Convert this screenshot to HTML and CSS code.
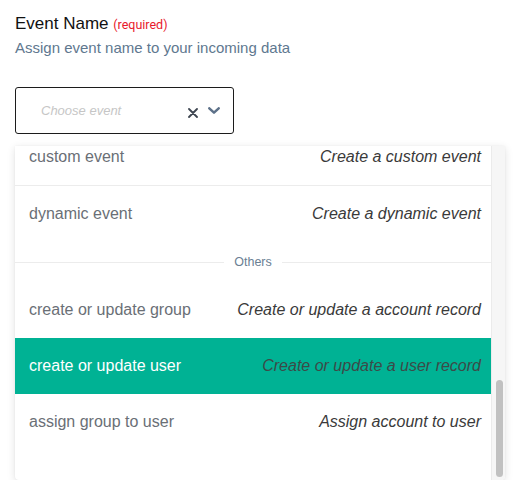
FILE: index.html
```html
<!DOCTYPE html>
<html>
<head>
<meta charset="utf-8">
<link rel="stylesheet" href="styles.css">
</head>
<body>
<div class="field">
  <div class="label">Event Name <span class="req">(required)</span></div>
  <div class="hint">Assign event name to your incoming data</div>
  <div class="select">
    <span class="placeholder">Choose event</span>
    <span class="icons">
      <svg class="clear" width="10" height="10" viewBox="0 0 10 10"><path d="M1 1 L9 9 M9 1 L1 9" stroke="#3d4550" stroke-width="1.8" stroke-linecap="round"/></svg>
      <svg class="chev" width="12" height="7" viewBox="0 0 12 7"><path d="M1.3 1.3 L6 5.6 L10.7 1.3" stroke="#5d7189" stroke-width="2.5" fill="none" stroke-linecap="round" stroke-linejoin="round"/></svg>
    </span>
  </div>
  <div class="menu">
    <div class="list">
      <div class="opt bordered"><span class="name">custom event</span><span class="desc">Create a custom event</span></div>
      <div class="opt"><span class="name">dynamic event</span><span class="desc">Create a dynamic event</span></div>
      <div class="group"><span class="gline"></span><span class="gtext">Others</span><span class="gline"></span></div>
      <div class="opt"><span class="name">create or update group</span><span class="desc">Create or update a account record</span></div>
      <div class="opt active"><span class="name">create or update user</span><span class="desc">Create or update a user record</span></div>
      <div class="opt"><span class="name">assign group to user</span><span class="desc">Assign account to user</span></div>
    </div>
    <div class="track"><div class="thumb"></div></div>
  </div>
</div>
</body>
</html>
```
FILE: styles.css
```css
html, body { margin: 0; padding: 0; background: #fff; }
body { font-family: "Liberation Sans", Arial, Helvetica, sans-serif; }
.field { padding: 13px 0 0 15px; width: 490px; }
.label { font-size: 17px; color: #111; line-height: 22px; height: 22px; }
.req { font-size: 12.5px; color: #e8192c; font-family: Roboto, "Liberation Sans", sans-serif; }
.hint { font-size: 15px; color: #60788f; margin-top: 3px; line-height: 20px; }
.select {
  margin-top: 29px; width: 217px; height: 45px;
  border: 1px solid #1c1c1c; border-radius: 3px;
  display: flex; align-items: flex-start; justify-content: space-between;
  box-sizing: content-box;
}
.placeholder { font-size: 13px; font-style: italic; color: #c6c6c6; margin-left: 25px; margin-top: 15px; line-height: 16px; }
.icons { display: flex; align-items: flex-start; gap: 10px; margin-right: 13px; margin-top: 19px; }
.clear { display: block; margin-top: 1px; }
.chev { display: block; }
.menu {
  position: relative; margin-top: 12px; width: 490px; height: 334px;
  overflow: hidden; border-radius: 0 0 4px 4px;
  box-shadow: 0 2px 8px rgba(0,0,0,0.12), 0 0 2px rgba(0,0,0,0.05);
  background: #fff;
}
.list { margin-top: -17px; width: 476px; }
.opt {
  height: 56px; display: flex; align-items: center; justify-content: space-between;
  padding: 0 10px 0 14px; font-size: 16px; box-sizing: border-box;
}
.opt.bordered { border-bottom: 1px solid #ececec; height: 57px; }
.name { color: #6a6f76; }
.desc { color: #3a3a3a; font-style: italic; }
.opt.active { background: #00b294; }
.opt.active .name { color: #fff; }
.opt.active .desc { color: #3c4a48; }
.group { height: 40px; display: flex; align-items: center; }
.gline { flex: 1; height: 1px; background: #ececec; }
.gtext { font-size: 12.5px; color: #6b7f94; padding: 0 10px; }
.track {
  position: absolute; right: 0; top: 0; bottom: 0; width: 14px;
  background: #f6f6f6; border-left: 1px solid #ebebeb; box-sizing: border-box;
}
.thumb {
  position: absolute; left: 4px; width: 7px; top: 234px; height: 97px;
  background: #c1c1c1; border-radius: 4px;
}
```
